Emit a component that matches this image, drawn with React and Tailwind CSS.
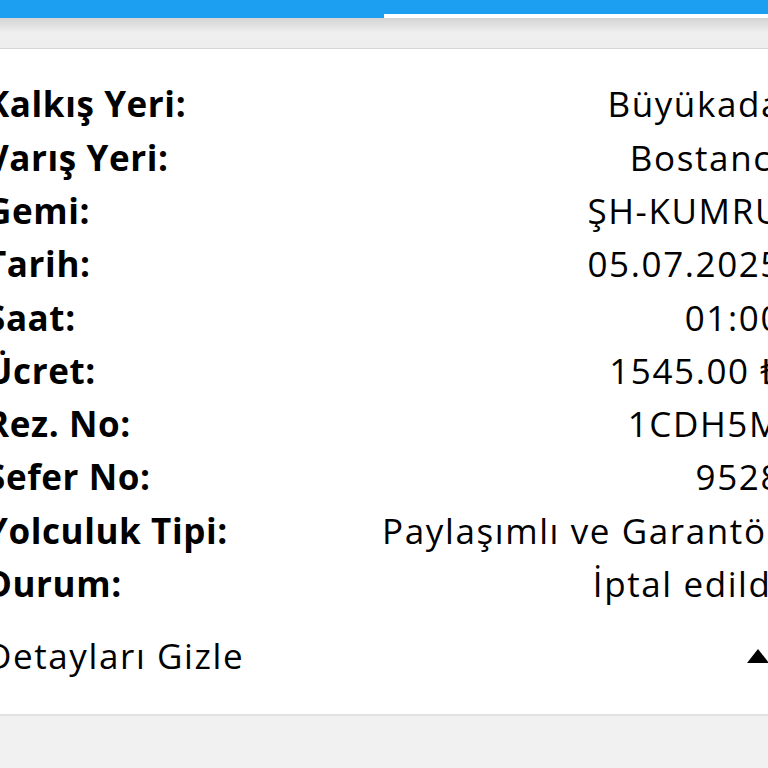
import React from 'react';

const rows = [
  ['Kalkış Yeri:', 'Büyükada'],
  ['Varış Yeri:', 'Bostancı'],
  ['Gemi:', 'ŞH-KUMRU'],
  ['Tarih:', '05.07.2025'],
  ['Saat:', '01:00'],
  ['Ücret:', '1545.00 ₺'],
  ['Rez. No:', '1CDH5M'],
  ['Sefer No:', '9528'],
  ['Yolculuk Tipi:', 'Paylaşımlı ve Garantörlü', true],
  ['Durum:', 'İptal edildi'],
];

export default function App() {
  return (
    <div className="w-[768px] h-[768px] overflow-hidden bg-[#f1f1f1] font-['Open_Sans',sans-serif] text-black">
      {/* top tabs */}
      <div className="flex h-[18px]">
        <div className="w-[384px] bg-[#1c9ff0]" />
        <div className="flex-1 flex flex-col">
          <div className="h-[14px] bg-[#1c9ff0]" />
          <div className="h-[4px] bg-white" />
        </div>
      </div>
      <div className="h-[31px] bg-gradient-to-b from-[#d4d4d4] via-[#efefef] to-[#eeeeee] border-b border-[#d6d6d6]" />

      {/* detail card */}
      <div className="bg-white border-b-2 border-[#e2e2e2] pt-[29px] pb-[31px]">
        <div className="w-[796px] -ml-[14px]">
          {rows.map(([label, value, long]) => (
            <div key={label} className="flex items-center justify-between h-[53.3px] text-[35px] whitespace-nowrap">
              <span className="font-bold tracking-[0.6px]">{label}</span>
              <span className={long ? 'tracking-[1.6px] -mr-[34px]' : 'tracking-[1.6px]'}>{value}</span>
            </div>
          ))}
          <div className="flex items-center justify-between h-[53px] mt-[19px] text-[35px] whitespace-nowrap">
            <span className="tracking-[1.6px]">Detayları Gizle</span>
            <svg width="24" height="16" viewBox="0 0 24 16" className="mr-[12px]">
              <polygon points="12,1 23,15 1,15" fill="#000" />
            </svg>
          </div>
        </div>
      </div>
    </div>
  );
}
